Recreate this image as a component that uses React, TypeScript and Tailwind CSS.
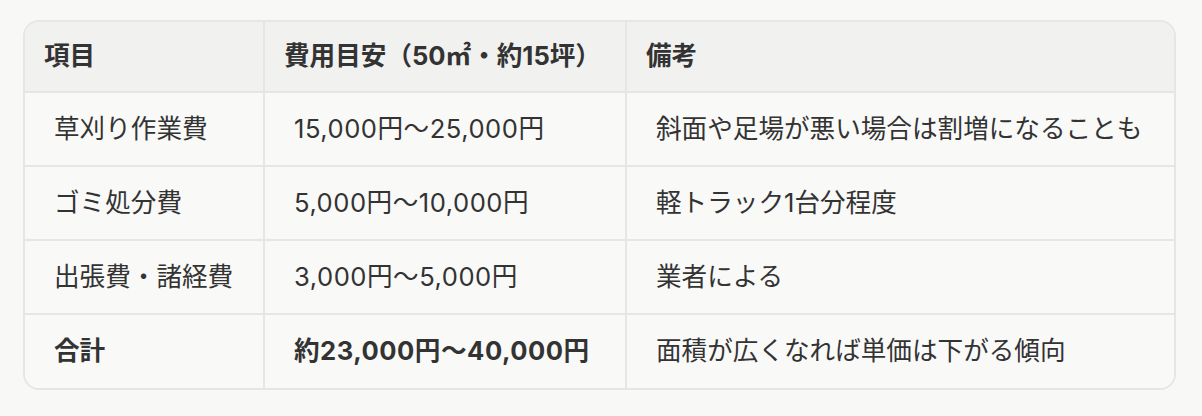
import React from "react";

const rows: { item: string; cost: string; note: string; bold?: boolean }[] = [
  { item: "草刈り作業費", cost: "15,000円～25,000円", note: "斜面や足場が悪い場合は割増になることも" },
  { item: "ゴミ処分費", cost: "5,000円～10,000円", note: "軽トラック1台分程度" },
  { item: "出張費・諸経費", cost: "3,000円～5,000円", note: "業者による" },
  { item: "合計", cost: "約23,000円～40,000円", note: "面積が広くなれば単価は下がる傾向", bold: true },
];

export default function App() {
  return (
    <div
      className="w-[1202px] h-[416px] bg-[#f8f8f7] pt-[20px] pl-[23px]"
      style={{ fontFamily: 'Inter, "Noto Sans CJK JP", "Noto Sans", sans-serif' }}
    >
      <div className="w-[1153px] rounded-[16px] border-2 border-[#e6e6e5] overflow-hidden">
        <table className="w-full border-collapse text-[25.6px] text-[#333333]">
          <colgroup>
            <col className="w-[239px]" />
            <col className="w-[362px]" />
            <col />
          </colgroup>
          <thead>
            <tr className="bg-[#f1f1f0] h-[70px]">
              <th className="text-left font-bold pl-[19px] border-r-2 border-b-2 border-[#e6e6e5] align-middle">項目</th>
              <th className="text-left font-bold pl-[19px] border-r-2 border-b-2 border-[#e6e6e5] align-middle">費用目安（50㎡・約15坪）</th>
              <th className="text-left font-bold pl-[19px] border-b-2 border-[#e6e6e5] align-middle">備考</th>
            </tr>
          </thead>
          <tbody>
            {rows.map((r, i) => {
              const last = i === rows.length - 1;
              const b = last ? "" : "border-b-2";
              const w = r.bold ? "font-bold" : "font-normal";
              return (
                <tr key={i} className="bg-[#f9f9f8] h-[74px]">
                  <td className={`pl-[29px] border-r-2 border-[#e6e6e5] ${b} ${w}`}>{r.item}</td>
                  <td className={`pl-[29px] tracking-[0.02em] border-r-2 border-[#e6e6e5] ${b} ${w}`}>{r.cost}</td>
                  <td className={`pl-[29px] border-[#e6e6e5] ${b} font-normal`}>{r.note}</td>
                </tr>
              );
            })}
          </tbody>
        </table>
      </div>
    </div>
  );
}
